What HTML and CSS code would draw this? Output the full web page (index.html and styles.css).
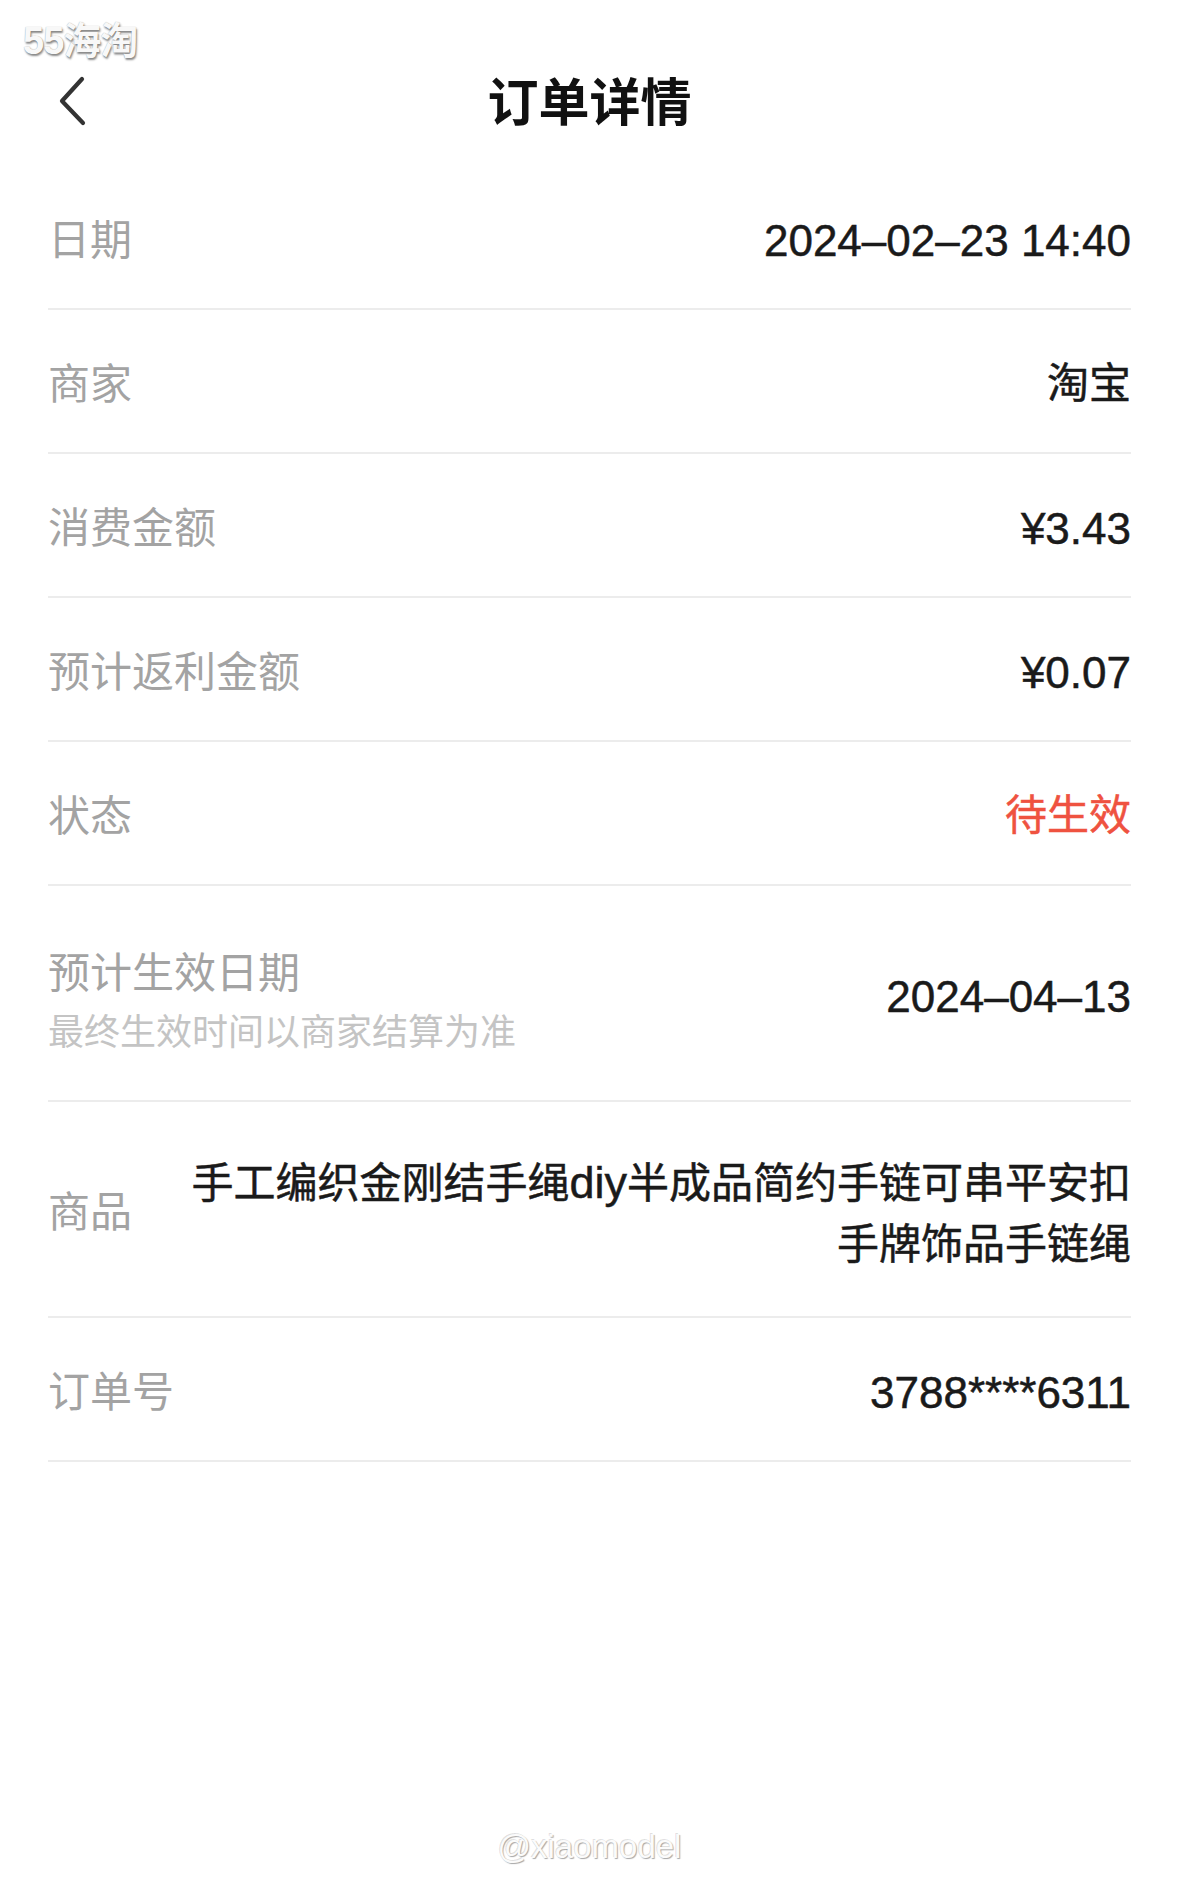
FILE: index.html
```html
<!DOCTYPE html>
<html lang="zh-CN">
<head>
<meta charset="utf-8">
<title>订单详情</title>
<link rel="stylesheet" href="styles.css">
</head>
<body>
<div class="page">
  <div class="wm-top">55海淘</div>
  <header class="nav">
    <div class="nav-left">
      <svg class="back" width="32" height="50" viewBox="0 0 32 50" aria-hidden="true">
        <path d="M25 3 L5 25 L26 47" fill="none" stroke="#333" stroke-width="4.2" stroke-linecap="round" stroke-linejoin="round"/>
      </svg>
    </div>
    <h1 class="title">订单详情</h1>
    <div class="nav-right"></div>
  </header>
  <div class="list">
    <div class="row"><span class="label">日期</span><span class="value num">2024–02–23 14:40</span></div>
    <div class="row"><span class="label">商家</span><span class="value">淘宝</span></div>
    <div class="row"><span class="label">消费金额</span><span class="value num">¥3.43</span></div>
    <div class="row"><span class="label">预计返利金额</span><span class="value num">¥0.07</span></div>
    <div class="row"><span class="label">状态</span><span class="value red">待生效</span></div>
    <div class="row tall">
      <div class="stack">
        <span class="label">预计生效日期</span>
        <span class="sub">最终生效时间以商家结算为准</span>
      </div>
      <span class="value num">2024–04–13</span>
    </div>
    <div class="row tall">
      <span class="label">商品</span>
      <span class="value multi">手工编织金刚结手绳<span class="latin">diy</span>半成品简约手链可串平安扣手牌饰品手链绳</span>
    </div>
    <div class="row"><span class="label">订单号</span><span class="value num">3788****6311</span></div>
  </div>
  <div class="wm-bottom">@xiaomodel</div>
</div>
</body>
</html>
```

FILE: styles.css
```css
html, body {
  margin: 0;
  padding: 0;
  background: #ffffff;
}

.page {
  position: relative;
  min-height: 1894px;
  font-family: "Liberation Sans", "Noto Sans CJK SC", sans-serif;
  color: #1c1c1c;
}

.wm-top {
  position: absolute;
  left: 23px;
  top: 19px;
  font-family: "Liberation Sans", "Noto Sans CJK SC", sans-serif;
  font-weight: 700;
  font-size: 38px;
  line-height: 44px;
  letter-spacing: -1px;
  color: #f8f8f8;
  text-shadow: 1px 2px 2px rgba(0, 0, 0, 0.45), 0 0 1px rgba(0, 0, 0, 0.35);
}

.nav {
  display: grid;
  grid-template-columns: 1fr auto 1fr;
  align-items: center;
  height: 50px;
  padding: 72px 0 44px;
}

.nav-left {
  padding-left: 57px;
  display: flex;
  align-items: center;
}

.back {
  display: block;
  margin-top: 4px;
}

.title {
  margin: 0;
  font-family: "Noto Sans CJK SC", sans-serif;
  font-size: 51px;
  line-height: 50px;
  font-weight: 700;
  color: #111111;
}

.list {
  margin: 0 48px;
}

.row {
  display: flex;
  align-items: center;
  justify-content: space-between;
  gap: 40px;
  min-height: 142px;
  border-bottom: 2px solid #ececec;
}

.row.tall {
  min-height: 214px;
}

.label {
  font-family: "Noto Sans CJK SC", sans-serif;
  font-size: 42px;
  line-height: 58px;
  color: #a3a3a3;
  white-space: nowrap;
  flex: none;
}

.stack {
  display: flex;
  flex-direction: column;
  padding-top: 14px;
}

.sub {
  font-family: "Noto Sans CJK SC", sans-serif;
  font-size: 36px;
  line-height: 60px;
  color: #c4c4c4;
  white-space: nowrap;
}

.value {
  font-family: "Liberation Sans", "Noto Sans CJK SC", sans-serif;
  font-size: 42px;
  line-height: 58px;
  padding-top: 6px;
  color: #1a1a1a;
  text-align: right;
  -webkit-text-stroke: 0.5px #1a1a1a;
}

.value.num {
  font-size: 44px;
  padding-top: 8px;
}

.value.red {
  color: #ef5240;
  -webkit-text-stroke: 0.5px #ef5240;
}

.value.multi {
  flex: 1;
  min-width: 0;
  line-height: 61px;
  padding-top: 9px;
}

.latin {
  font-size: 45px;
}

.wm-bottom {
  position: absolute;
  left: 0;
  right: 0;
  bottom: 27px;
  text-align: center;
  font-family: "Liberation Sans", sans-serif;
  font-size: 33px;
  line-height: 40px;
  color: #fbfbfb;
  text-shadow: 1px 1px 1px rgba(0, 0, 0, 0.35), -1px -1px 0 rgba(0, 0, 0, 0.12);
}
```
